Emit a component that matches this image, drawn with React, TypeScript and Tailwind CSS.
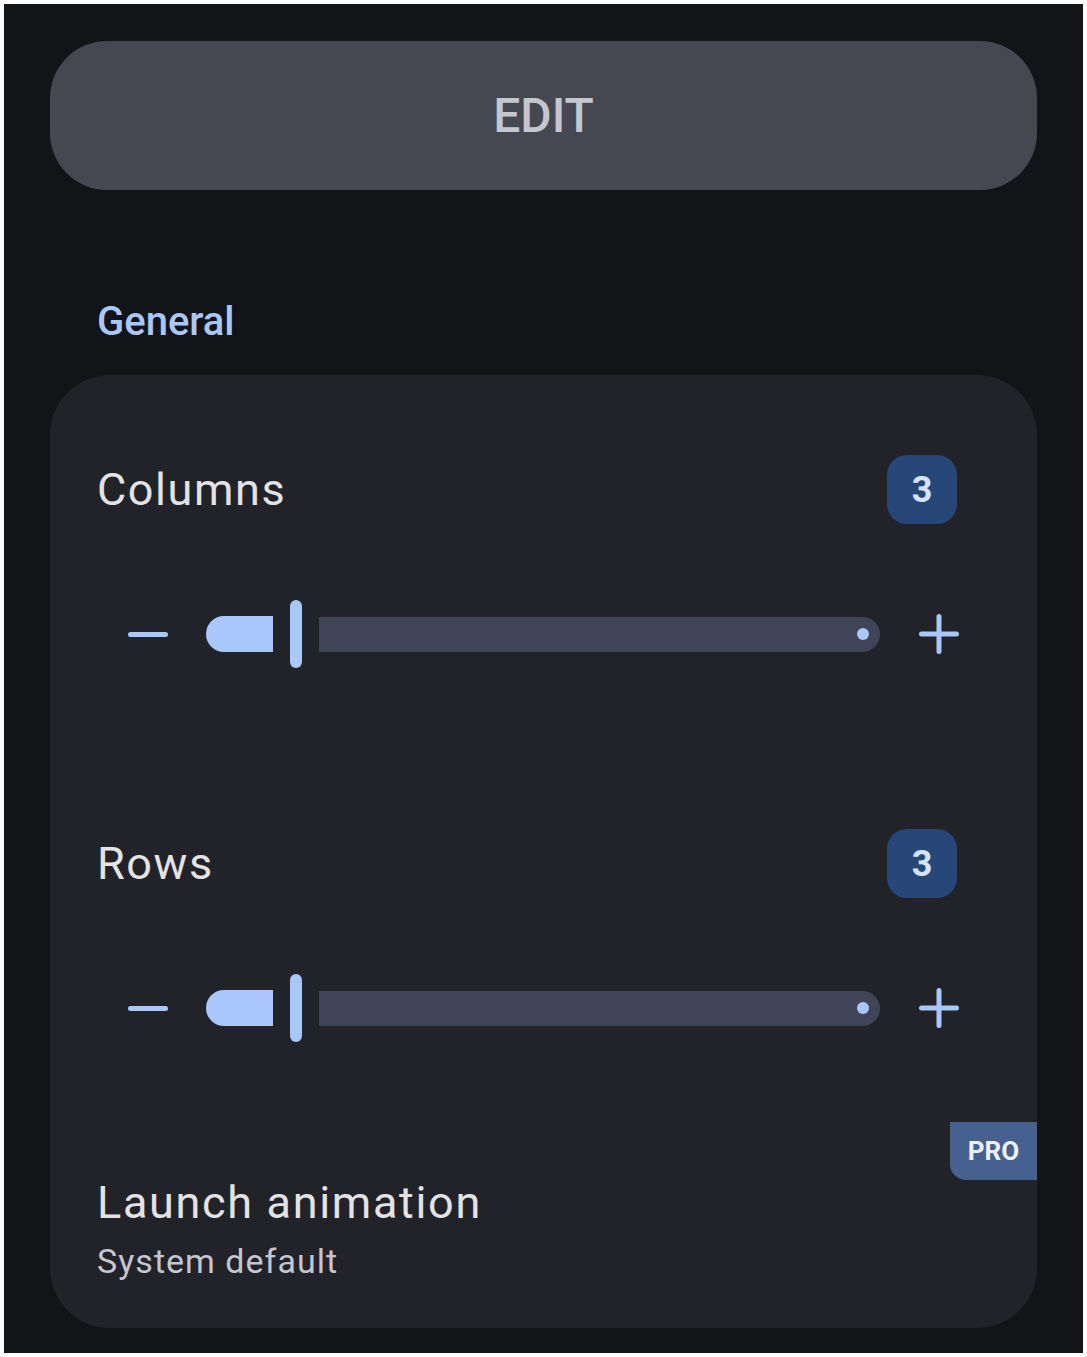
import React from "react";

const font = { fontFamily: "Roboto, 'Noto Sans', sans-serif" };

function Stepper() {
  return (
    <div className="mx-[78px] mt-[76px] flex h-[68px] items-center">
      {/* minus */}
      <div className="h-[5px] w-[40px] rounded-full bg-[#a8c7fa]" />
      {/* active part of the track */}
      <div className="ml-[38px] h-[36px] w-[67px] rounded-l-full rounded-r-[5px] bg-[#a8c7fa]" />
      {/* handle */}
      <div className="ml-[17px] h-[68px] w-[12px] rounded-full bg-[#a8c7fa]" />
      {/* inactive part */}
      <div className="ml-[17px] flex h-[35px] flex-1 items-center justify-end rounded-l-[5px] rounded-r-full bg-[#3f4556] pr-[11px]">
        <div className="h-[12px] w-[12px] rounded-full bg-[#a8c7fa]" />
      </div>
      {/* plus */}
      <svg className="ml-[39px]" width="40" height="40" viewBox="0 0 40 40">
        <path d="M20 2.5v35M2.5 20h35" stroke="#a8c7fa" strokeWidth="5" strokeLinecap="round" fill="none" />
      </svg>
    </div>
  );
}

function ValueRow({ label, value }: { label: string; value: number }) {
  return (
    <div className="flex h-[69px] items-center justify-between pl-[47px] pr-[80px]">
      <span className="text-[45px] leading-[54px] tracking-[0.035em] text-[#e3e3e6]">{label}</span>
      <div className="flex h-[69px] w-[70px] items-center justify-center rounded-[20px] bg-[#274779] text-[36px] font-bold text-[#d6e3ff]">
        {value}
      </div>
    </div>
  );
}

export default function App() {
  return (
    <div className="h-[1357px] bg-white p-1" style={font}>
      <div className="h-[1349px] bg-[#131418] px-[46px] pt-[37px]">
        <button
          type="button"
          className="flex h-[149px] w-full items-center justify-center rounded-[57px] bg-[#464851] text-[48px] font-medium text-[#c4c6d0]"
        >
          EDIT
        </button>

        <div className="mt-[108px] pl-[47px] text-[40px] font-medium leading-[48px] text-[#a8c7fa]">General</div>

        <div className="relative mt-[29px] h-[953px] overflow-hidden rounded-[60px] bg-[#222328] pt-[80px]">
          <ValueRow label="Columns" value={3} />
          <Stepper />

          <div className="mt-[161px]">
            <ValueRow label="Rows" value={3} />
          </div>
          <Stepper />

          <div className="absolute right-0 top-[747px] flex h-[58px] w-[87px] items-center justify-center rounded-bl-[16px] bg-[#44618f] text-[26px] font-bold text-[#eef2fa]">
            PRO
          </div>

          <div className="mt-[134px] pl-[47px] text-[45px] leading-[54px] tracking-[0.037em] text-[#e3e3e6]">
            Launch animation
          </div>
          <div className="mt-[11px] pl-[47px] text-[34px] leading-[40px] tracking-[0.03em] text-[#c4c6d0]">
            System default
          </div>
        </div>
      </div>
    </div>
  );
}
